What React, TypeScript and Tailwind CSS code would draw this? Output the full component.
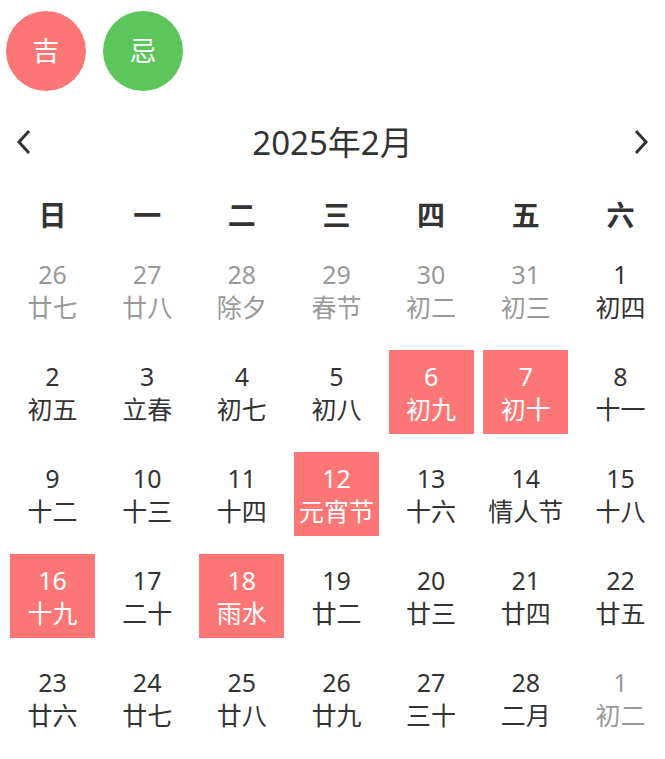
import * as React from "react";

type Day = { d: number; l: string; muted?: boolean; hot?: boolean };

const weekdays = ["日", "一", "二", "三", "四", "五", "六"];

const days: Day[] = [
  { d: 26, l: "廿七", muted: true },
  { d: 27, l: "廿八", muted: true },
  { d: 28, l: "除夕", muted: true },
  { d: 29, l: "春节", muted: true },
  { d: 30, l: "初二", muted: true },
  { d: 31, l: "初三", muted: true },
  { d: 1, l: "初四" },
  { d: 2, l: "初五" },
  { d: 3, l: "立春" },
  { d: 4, l: "初七" },
  { d: 5, l: "初八" },
  { d: 6, l: "初九", hot: true },
  { d: 7, l: "初十", hot: true },
  { d: 8, l: "十一" },
  { d: 9, l: "十二" },
  { d: 10, l: "十三" },
  { d: 11, l: "十四" },
  { d: 12, l: "元宵节", hot: true },
  { d: 13, l: "十六" },
  { d: 14, l: "情人节" },
  { d: 15, l: "十八" },
  { d: 16, l: "十九", hot: true },
  { d: 17, l: "二十" },
  { d: 18, l: "雨水", hot: true },
  { d: 19, l: "廿二" },
  { d: 20, l: "廿三" },
  { d: 21, l: "廿四" },
  { d: 22, l: "廿五" },
  { d: 23, l: "廿六" },
  { d: 24, l: "廿七" },
  { d: 25, l: "廿八" },
  { d: 26, l: "廿九" },
  { d: 27, l: "三十" },
  { d: 28, l: "二月" },
  { d: 1, l: "初二", muted: true },
];

export default function App() {
  return (
    <div className="min-h-screen bg-white font-['Noto_Sans','Noto_Sans_CJK_SC',sans-serif] text-[#333]">
      {/* legend */}
      <div className="flex gap-[17px] pl-[6px] pt-[11px]">
        <div className="flex h-[80px] w-[80px] items-center justify-center rounded-full bg-[#fd7676] text-[27px] text-white">
          吉
        </div>
        <div className="flex h-[80px] w-[80px] items-center justify-center rounded-full bg-[#5cc55c] text-[27px] text-white">
          忌
        </div>
      </div>

      {/* month header */}
      <div className="mt-[28px] flex h-[46px] items-center justify-between px-[14px]">
        <button className="flex h-[30px] w-[20px] items-center justify-center">
          <svg width="16" height="26" viewBox="0 0 16 26" fill="none" stroke="#333" strokeWidth="3">
            <path d="M13 2 L3 13 L13 24" />
          </svg>
        </button>
        <div className="text-[33px] leading-none text-[#333]">2025年2月</div>
        <button className="flex h-[30px] w-[20px] items-center justify-center">
          <svg width="16" height="26" viewBox="0 0 16 26" fill="none" stroke="#333" strokeWidth="3">
            <path d="M3 2 L13 13 L3 24" />
          </svg>
        </button>
      </div>

      {/* weekdays */}
      <div className="mt-[20px] grid grid-cols-[repeat(7,85px)] gap-x-[9.67px] pl-[10px]">
        {weekdays.map((w) => (
          <div key={w} className="flex h-[60px] items-center justify-center text-[28px] font-bold text-[#333]">
            {w}
          </div>
        ))}
      </div>

      {/* days */}
      <div className="mt-[3px] grid grid-cols-[repeat(7,85px)] gap-x-[9.67px] gap-y-[18px] pl-[10px]">
        {days.map((day, i) => (
          <div
            key={i}
            className={
              "flex h-[84px] flex-col items-center justify-center pt-[2px] text-[25px] leading-[33px] " +
              (day.hot ? "bg-[#fd7676] text-white" : day.muted ? "text-[#999]" : "text-[#333]")
            }
          >
            <span>{day.d}</span>
            <span>{day.l}</span>
          </div>
        ))}
      </div>
    </div>
  );
}
